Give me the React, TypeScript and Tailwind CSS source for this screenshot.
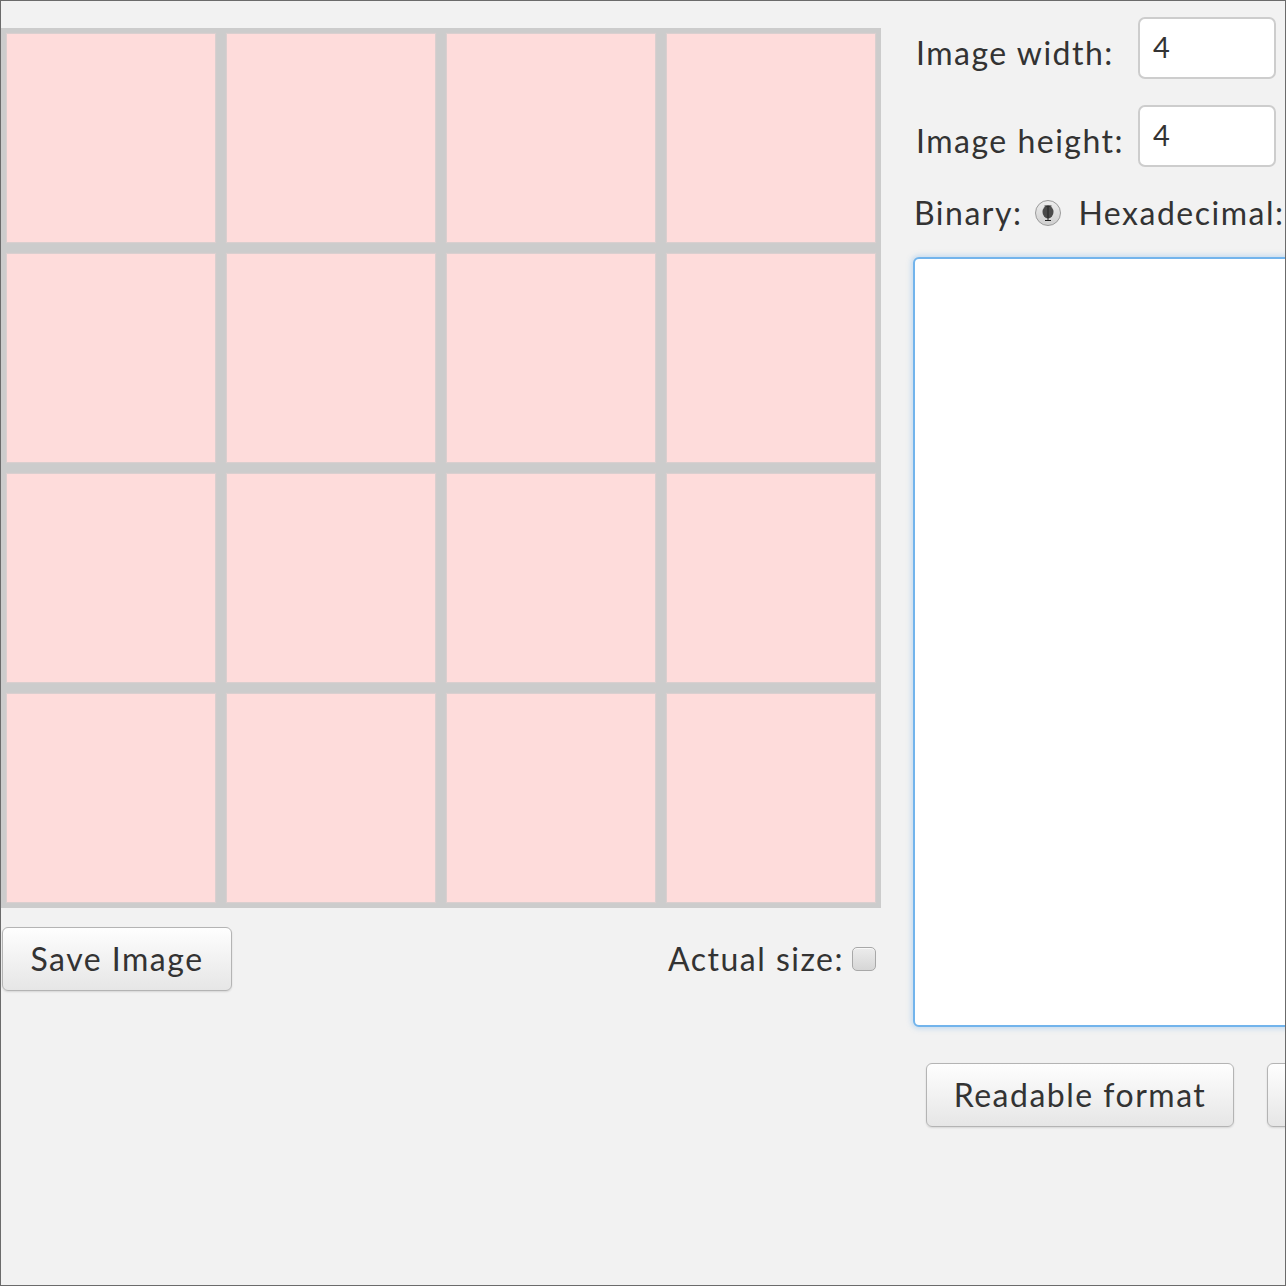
import React from 'react'

const cells = Array.from({ length: 16 })

function FxButton({ label, className }: { label: string; className?: string }) {
  return (
    <button
      className={`h-[64px] shrink-0 rounded-[6px] border border-[#b4b4b4] bg-gradient-to-b from-[#fefefe] to-[#e6e6e6] text-[32px] tracking-[1.5px] text-[#333333] shadow-[0_1px_2px_rgba(0,0,0,0.12)] ${className ?? ''}`}
    >
      {label}
    </button>
  )
}

export default function App() {
  return (
    <div className="w-[1286px] h-[1286px] overflow-hidden border border-[#6b6b6b] bg-[#f2f2f2] font-['Lato','Liberation_Sans',sans-serif] text-[#333333]">
      <div className="flex">
        {/* left: pixel grid */}
        <div className="w-[880px] shrink-0 pt-[27px]">
          <div className="grid grid-cols-4 bg-[#cccccc]">
            {cells.map((_, i) => (
              <div key={i} className="p-[6px]">
                <div className="h-[208px] w-[208px] bg-[#fedcdb] shadow-[0_0_1px_1px_#d9cfcf]" />
              </div>
            ))}
          </div>
          <div className="mt-[19px] flex items-center justify-between">
            <FxButton label="Save Image" className="ml-[1px] w-[230px]" />
            <div className="mr-[5px] flex items-center gap-[8px]">
              <span className="text-[32px] leading-none tracking-[1.5px]">Actual size:</span>
              <span className="h-[24px] w-[24px] rounded-[5px] border border-[#a8a8a8] bg-gradient-to-b from-[#ececec] to-[#d6d6d6] shadow-[inset_0_1px_0_#f8f8f8]" />
            </div>
          </div>
        </div>

        {/* right: settings + text */}
        <div className="ml-[32px] flex w-[380px] shrink-0 flex-col pt-[16px]">
          <div className="flex items-center">
            <span className="ml-[3px] w-[222px] pt-[10px] text-[32px] leading-none tracking-[1.5px]">Image width:</span>
            <div className="flex h-[62px] w-[138px] items-center rounded-[7px] border-2 border-[#cdcdcd] bg-white px-[13px] pb-[4px] text-[29px] leading-none">4</div>
          </div>
          <div className="mt-[26px] flex items-center">
            <span className="ml-[3px] w-[222px] pt-[10px] text-[32px] leading-none tracking-[1.5px]">Image height:</span>
            <div className="flex h-[62px] w-[138px] items-center rounded-[7px] border-2 border-[#cdcdcd] bg-white px-[13px] pb-[4px] text-[29px] leading-none">4</div>
          </div>
          <div className="mt-[30px] ml-[1px] flex items-center whitespace-nowrap">
            <span className="text-[32px] leading-none tracking-[1.5px]">Binary:</span>
            <span className="ml-[13px] mr-[17px] flex h-[26px] w-[26px] items-center justify-center rounded-full border border-[#9a9a9a] bg-gradient-to-b from-[#ededed] to-[#cfcfcf]">
              <svg width="14" height="18" viewBox="0 0 14 18">
                <ellipse cx="7" cy="8" rx="5.5" ry="6.5" fill="#4a4a4a" />
                <path d="M7 2.5 V16 M4 16.5 H10 M3.5 2 H10.5" stroke="#222" strokeWidth="1" fill="none" />
              </svg>
            </span>
            <span className="text-[32px] leading-none tracking-[1.5px]">Hexadecimal:</span>
          </div>
          <div className="mt-[28px] h-[770px] w-[400px] rounded-[6px] border-2 border-[#72b4ec] bg-white shadow-[0_0_5px_2px_rgba(120,180,235,0.35)]" />
          <div className="mt-[36px] flex gap-[33px]">
            <FxButton label="Readable format" className="ml-[13px] w-[308px]" />
            <FxButton label="" className="w-[120px]" />
          </div>
        </div>
      </div>
    </div>
  )
}
